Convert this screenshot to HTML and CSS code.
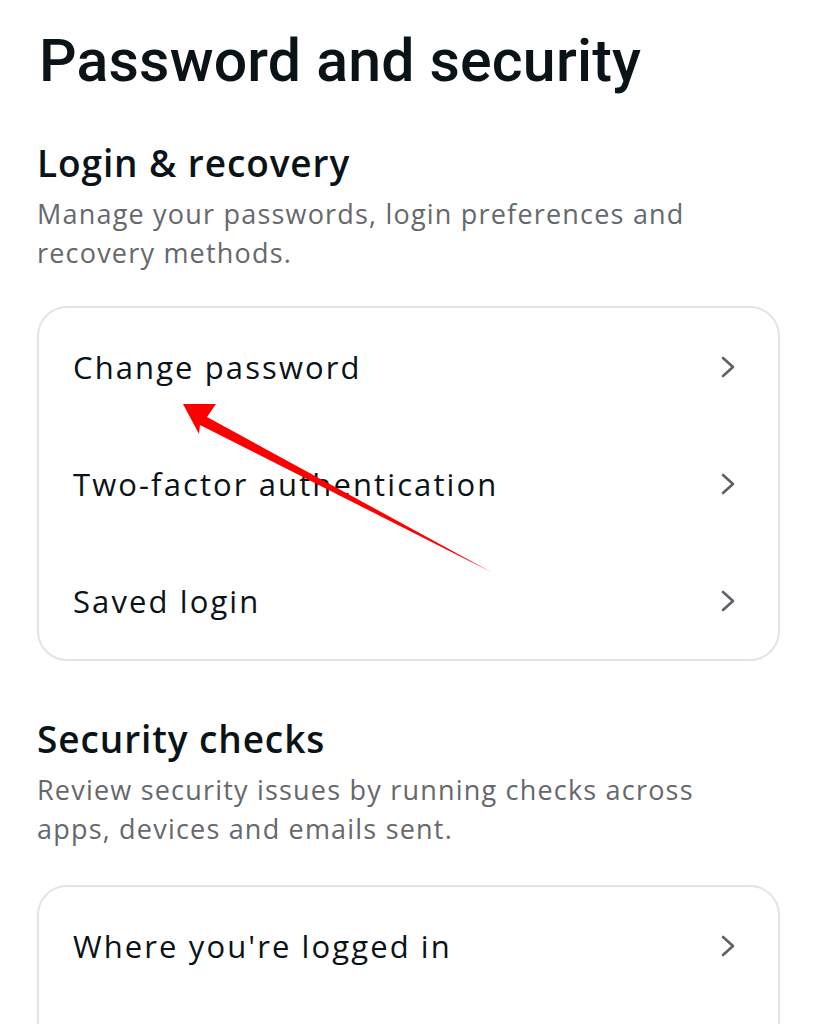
FILE: index.html
```html
<!DOCTYPE html>
<html>
<head>
<meta charset="utf-8">
<link rel="stylesheet" href="styles.css">
</head>
<body>
<main class="page">
  <h1 class="title">Password and security</h1>

  <section class="section">
    <h2 class="section-title">Login &amp; recovery</h2>
    <p class="section-desc">Manage your passwords, login preferences and recovery methods.</p>
    <div class="card">
      <div class="row"><span class="row-label">Change password</span><svg class="chev" viewBox="0 0 16 24"><path d="M3 3 L13 12 L3 21"/></svg></div>
      <div class="row"><span class="row-label">Two-factor authentication</span><svg class="chev" viewBox="0 0 16 24"><path d="M3 3 L13 12 L3 21"/></svg></div>
      <div class="row"><span class="row-label">Saved login</span><svg class="chev" viewBox="0 0 16 24"><path d="M3 3 L13 12 L3 21"/></svg></div>
    </div>
  </section>

  <section class="section section-2">
    <h2 class="section-title">Security checks</h2>
    <p class="section-desc">Review security issues by running checks across apps, devices and emails sent.</p>
    <div class="card">
      <div class="row"><span class="row-label">Where you're logged in</span><svg class="chev" viewBox="0 0 16 24"><path d="M3 3 L13 12 L3 21"/></svg></div>
      <div class="row"></div>
    </div>
  </section>

  <svg class="arrow" viewBox="0 0 817 1024" width="817" height="1024">
    <polygon points="183,404 216,404 207,417 491,572 200,425 199,434" fill="#ff0000"/>
  </svg>
</main>
</body>
</html>
```

FILE: styles.css
```css
html, body {
  margin: 0;
  padding: 0;
  background: #ffffff;
}
body {
  font-family: "Open Sans", Roboto, "Liberation Sans", sans-serif;
  color: #1c1e21;
  overflow: hidden;
}
.page {
  position: relative;
  width: 817px;
  height: 1024px;
  padding: 0 37px;
  box-sizing: border-box;
}
.title {
  margin: 0 0 0 2px;
  padding-top: 26px;
  font-family: Roboto, "Liberation Sans", sans-serif;
  font-size: 59px;
  font-weight: 500;
  line-height: 70px;
  letter-spacing: 0.2px;
  color: #0a1317;
}
.section {
  margin-top: 44px;
}
.section-2 {
  margin-top: 55px;
}
.section-title {
  margin: 0;
  font-size: 37px;
  font-weight: 600;
  line-height: 46px;
  letter-spacing: 0.9px;
  color: #0a1317;
}
.section-desc {
  margin: 8px 0 0;
  max-width: 680px;
  font-size: 27px;
  line-height: 39px;
  color: #65686c;
  letter-spacing: 1.2px;
}
.card {
  margin-top: 34px;
  border: 2px solid #e2e4e7;
  border-radius: 30px;
  padding: 0 34px;
  display: flex;
  flex-direction: column;
}
.section-2 .card {
  margin-top: 37px;
}
.row {
  height: 117px;
  display: flex;
  align-items: center;
  justify-content: space-between;
}
.row-label {
  font-size: 31px;
  letter-spacing: 2.1px;
  color: #0a1317;
}
.chev {
  width: 16px;
  height: 24px;
  fill: none;
  stroke: #5d6166;
  stroke-width: 2.6;
  stroke-linecap: round;
  stroke-linejoin: round;
  margin-right: 8px;
}
.arrow {
  position: absolute;
  left: 0;
  top: 0;
  pointer-events: none;
}
```
